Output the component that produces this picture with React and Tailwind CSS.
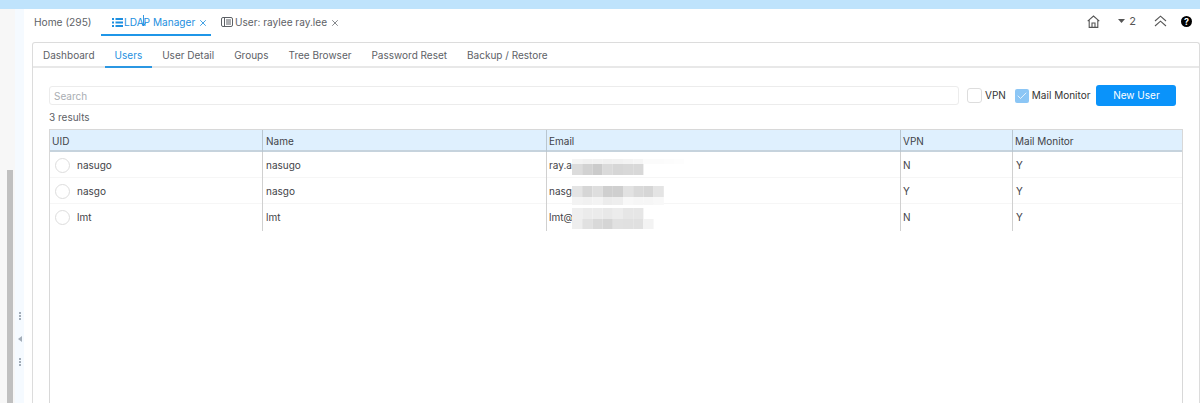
import { X, Check } from "lucide-react";

const subTabs = ["Dashboard", "Users", "User Detail", "Groups", "Tree Browser", "Password Reset", "Backup / Restore"];

const users = [
  { uid: "nasugo", email: "ray.a", vpn: "N", mail: "Y" },
  { uid: "nasgo", email: "nasg", vpn: "Y", mail: "Y" },
  { uid: "lmt", email: "lmt@", vpn: "N", mail: "Y" },
];

// mosaic over the email addresses: one { y, h, colours } per band
const mosaics = [
  [
    { y: 6, h: 5, c: ["#f4f4f4", "#f1f1f1", "#f1f1f1", "#f0f0f0", "#f1f1f1", "#f3f3f3", "#f5f5f5", "#fbfbfb", "#fbfbfb", "#fcfcfc", "#fdfdfd"] },
    { y: 11, h: 11, c: ["#dcdcdc", "#d2d2d2", "#cbcbcb", "#dadada", "#d6d6d6", "#d8d8d8", "#d8d8d8"] },
  ],
  [
    { y: 7, h: 11, c: ["#e4e4e4", "#d6d6d6", "#dedede", "#cfcfcf", "#cfcfcf", "#e2e2e2", "#d9d9d9", "#d6d6d6", "#e4e4e4"] },
    { y: 18, h: 8, c: ["#f3f3f3", "#f1f1f1", "#f3f3f3", "#ececec", "#eeeeee", "#f8f8f8", "#f6f6f6", "#f6f6f6", "#f8f8f8"] },
  ],
  [
    { y: 3, h: 11, c: ["#efefef", "#ebebeb", "#ebebeb", "#e8e8e8", "#ececec", "#e6e6e6", "#e6e6e6"] },
    { y: 14, h: 10, c: ["#eeeeee", "#e1e1e1", "#d9d9d9", "#d5d5d5", "#e1e1e1", "#e0e0e0", "#e0e0e0", "#f3f3f3"] },
  ],
];

function Mosaic({ bands }) {
  return (
    <svg width="112" height="26" viewBox="0 0 112 26" className="shrink-0">
      {bands.map((b) =>
        b.c.map((c, i) => <rect key={`${b.y}-${i}`} x={i * 10.2} y={b.y} width="10.2" height={b.h} fill={c} />)
      )}
    </svg>
  );
}

export default function App() {
  return (
    <div className="h-[403px] w-[1200px] overflow-hidden flex flex-col bg-white font-['Inter',sans-serif] text-[10px] text-[#4a4f55]">
      <div className="h-[9px] shrink-0 bg-[#bfe3fc]" />
      <div className="flex flex-1 min-h-0">
        {/* left rail */}
        <div className="w-[15px] shrink-0 bg-[#f7f7f7] flex flex-col justify-end pl-[7px]">
          <div className="h-[233px] w-[6px] bg-[#c0c0c0]" />
        </div>
        <div className="w-[9px] shrink-0 bg-[#f5faff] flex flex-col items-center justify-end pb-[37px] gap-[16px] text-[#a3adb8]">
          <svg width="2" height="8" viewBox="0 0 2 8"><path d="M0 0h2v2H0zM0 3h2v2H0zM0 6h2v2H0z" fill="currentColor" /></svg>
          <svg width="4" height="6" viewBox="0 0 4 6"><path d="M4 0v6L0 3z" fill="currentColor" /></svg>
          <svg width="2" height="8" viewBox="0 0 2 8"><path d="M0 0h2v2H0zM0 3h2v2H0zM0 6h2v2H0z" fill="currentColor" /></svg>
        </div>

        <div className="flex-1 min-w-0 flex flex-col pl-[8px]">
          {/* document tabs */}
          <div className="h-[24px] mt-[2px] shrink-0 flex items-start whitespace-nowrap">
            <div className="pl-[2px] pt-[4px] w-[69px] text-[#5d6166] text-[10.2px]">Home (295)</div>
            <div className="relative w-[110px] h-[25px] border-b-2 border-[#1f96e8] flex items-start pt-[4px] pl-[11px] text-[#1d8fe0]">
              <svg width="11" height="9" viewBox="0 0 11 9" fill="currentColor" className="mt-[3px] mr-[1px]">
                <path d="M0 0h2v2H0zM3.5 0H11v2H3.5zM0 3.5h2v2H0zM3.5 3.5H11v2H3.5zM0 7h2v2H0zM3.5 7H11v2H3.5z" />
              </svg>
              <span className="text-[10.1px]">LDAP Manager</span>
              <X size={10} strokeWidth={2} className="ml-[3px] mt-[3px]" />
              {/* mouse cursor caught in the shot */}
              <svg width="5" height="12" viewBox="0 0 5 12" fill="none" stroke="#1d8fe0" strokeWidth="0.9" className="absolute left-[40px] top-[4px]">
                <path d="M2.5 0v11M0.5 8l2 3 2-3" />
              </svg>
            </div>
            <div className="flex items-start pt-[4px] pl-[10px] text-[#5d6166]">
              <svg width="12" height="10" viewBox="0 0 12 10" fill="none" stroke="currentColor" strokeWidth="1" className="mt-[2px] mr-[2px]">
                <rect x="0.5" y="0.5" width="11" height="9" rx="1.5" />
                <path d="M3.5 1v8M5 3h5M5 5h5M5 7h5" />
              </svg>
              <span className="text-[10.1px]">User: raylee ray.lee</span>
              <X size={10} strokeWidth={1.8} className="ml-[3px] mt-[3px]" />
            </div>
            <div className="ml-auto flex items-center text-[#555] h-[20px] pr-[8px]">
              <svg width="13" height="13" viewBox="0 0 13 13" fill="none" stroke="currentColor" strokeWidth="1.1">
                <path d="M0.7 6.2 6.5 1l5.8 5.2M2.2 5.2v7.2h8.6V5.2M5 12.4V8h3v4.4" />
              </svg>
              <svg width="7" height="4" viewBox="0 0 7 4" className="ml-[18px]"><path d="M0 0h7L3.5 4z" fill="#555" /></svg>
              <span className="ml-[4px] text-[11px]">2</span>
              <svg width="13" height="12" viewBox="0 0 13 12" fill="none" stroke="currentColor" strokeWidth="1.1" className="ml-[18px]">
                <path d="M1 6 6.5 1.2 12 6M1 11 6.5 6.2 12 11" />
              </svg>
              <div className="ml-[14px] w-[11px] h-[11px] rounded-full bg-black text-white text-[9px] leading-[11px] font-bold text-center">?</div>
            </div>
          </div>

          {/* card */}
          <div className="mt-[7px] flex-1 min-h-0 flex flex-col border border-b-0 border-[#dcdcdc] rounded-t-[3px]">
            <div className="h-[25px] shrink-0 border-b-2 border-[#e8e8e8] flex text-[#5d6166]">
              {subTabs.map((t) =>
                t === "Users" ? (
                  <div key={t} className="px-[10px] h-[25px] pt-[5px] border-b-2 border-[#2b97e2] text-[#1d8fe0]">{t}</div>
                ) : (
                  <div key={t} className="px-[10px] pt-[5px]">{t}</div>
                )
              )}
            </div>

            <div className="flex-1 min-h-0 flex flex-col pl-[16px] pr-[16px]">
              {/* toolbar */}
              <div className="mt-[17px] h-[21px] shrink-0 flex items-center whitespace-nowrap">
                <div className="w-[910px] h-[19px] border border-[#ececec] rounded-[3px] pl-[4px] leading-[18px] text-[#a9adb2] text-[10px]">Search</div>
                <div className="ml-[8px] w-[15px] h-[15px] rounded-[3px] border border-[#dddddd]" />
                <span className="ml-[3px] text-[#333]">VPN</span>
                <div className="ml-[9px] w-[14px] h-[14px] rounded-[2px] bg-[#8cc6f5] flex items-center justify-center">
                  <Check size={12} strokeWidth={1.5} className="text-white" />
                </div>
                <span className="ml-[3px] text-[#333]">Mail Monitor</span>
                <div className="ml-[6px] w-[80px] h-[21px] rounded-[3px] bg-[#0a93fa] text-white text-center leading-[21px]">New User</div>
              </div>
              <div className="mt-[4px] h-[14px] shrink-0 text-[10px] leading-[14px] text-[#5d6166]">3 results</div>

              {/* table */}
              <div className="mt-[5px] flex-1 min-h-0 border-l border-r border-t border-[#d8d8d8] text-[#3f4348]">
                <div className="h-[22px] grid grid-cols-[213px_284px_354px_112px_1fr] bg-[#dff0fe] border-b-2 border-[#c6d3dd] leading-[22px]">
                  {["UID", "Name", "Email", "VPN", "Mail Monitor"].map((h, i) => (
                    <div key={h} className={`pl-[2px] ${i === 1 ? "pl-[3px]" : ""} ${i < 4 ? "border-r border-[#b9c6d0]" : ""}`}>{h}</div>
                  ))}
                </div>
                {users.map((u, i) => (
                  <div key={u.uid} className={`grid grid-cols-[213px_284px_354px_112px_1fr] leading-[27px] ${i < 2 ? "h-[26px] border-b border-[#f6f6f6]" : "h-[25px]"}`}>
                    <div className="flex items-center pl-[5px] border-r border-[#d0d0d0]">
                      <div className="w-[15px] h-[15px] rounded-full border border-[#dddddd]" />
                      <span className="ml-[7px]">{u.uid}</span>
                    </div>
                    <div className="pl-[3px] border-r border-[#d0d0d0]">{u.uid}</div>
                    <div className="pl-[2px] border-r border-[#d0d0d0] flex items-center">
                      <span className="w-[23px] shrink-0">{u.email}</span>
                      <Mosaic bands={mosaics[i]} />
                    </div>
                    <div className="pl-[2px] border-r border-[#d0d0d0]">{u.vpn}</div>
                    <div className="pl-[3px]">{u.mail}</div>
                  </div>
                ))}
              </div>
            </div>
          </div>
        </div>
      </div>
    </div>
  );
}
